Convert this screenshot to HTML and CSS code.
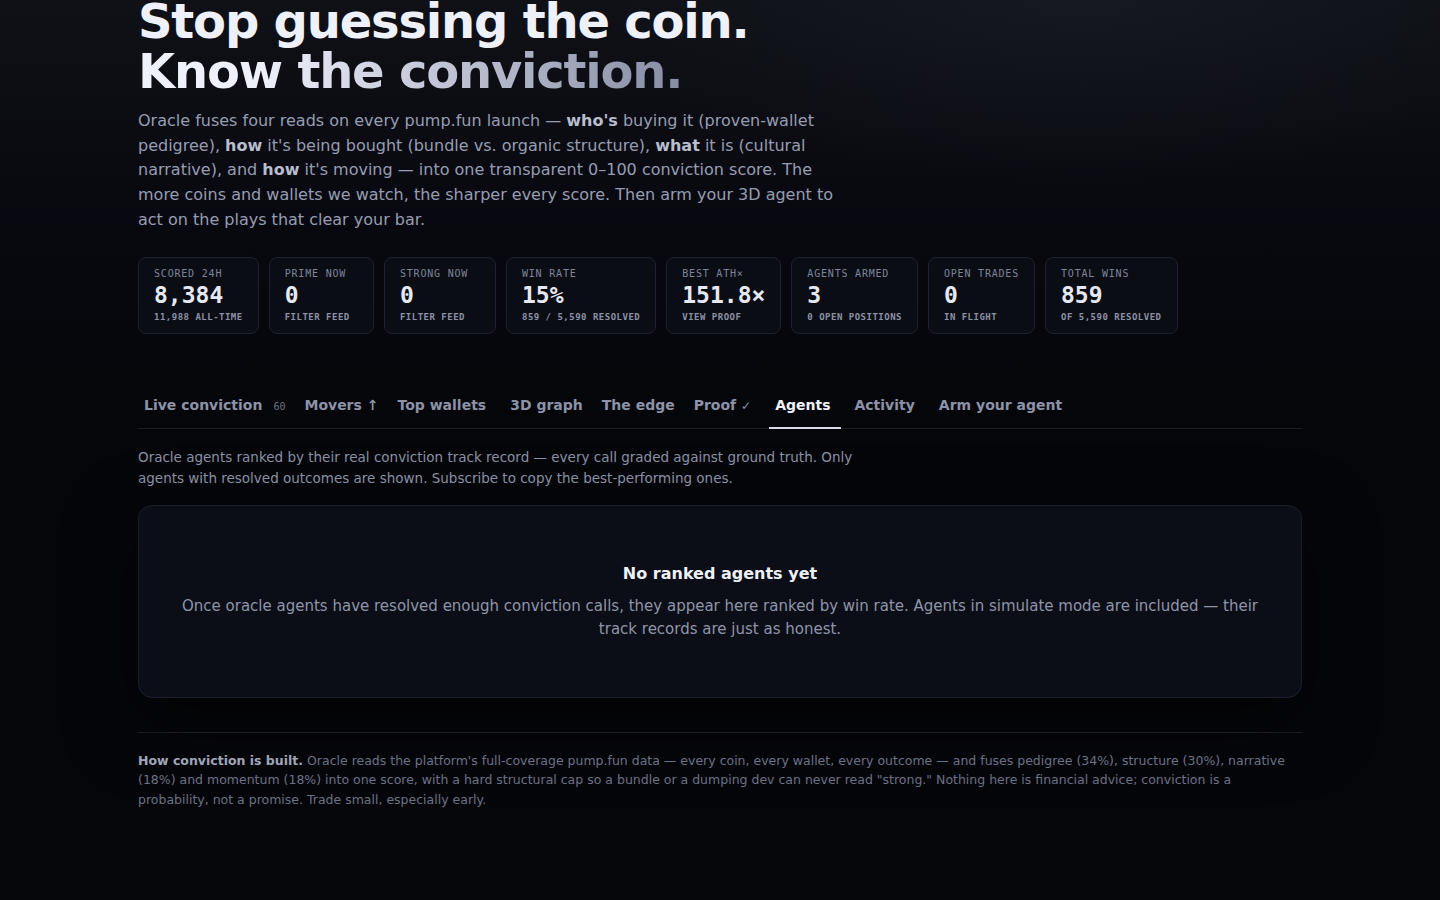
FILE: index.html
```html
<!DOCTYPE html>
<html lang="en">
  <head>
    <meta charset="UTF-8" />
    <title>Oracle — Conviction</title>
    <link rel="stylesheet" href="styles.css">
  </head>
  <body>
    <main class="page">
      <!-- Hero -->
      <section class="hero">
        <h1>Stop guessing the coin.<br /><span class="grad">Know the conviction.</span></h1>
        <p class="lede">
          Oracle fuses four reads on every pump.fun launch — <b>who's</b> buying it
          (proven-wallet pedigree), <b>how</b> it's being bought (bundle vs. organic
          structure), <b>what</b> it is (cultural narrative), and <b>how</b> it's moving —
          into one transparent 0–100 conviction score. The more coins and wallets we
          watch, the sharper every score. Then arm your 3D agent to act on the plays
          that clear your bar.
        </p>
      </section>

      <!-- Stat strip -->
      <div class="stats">
        <div class="stat">
          <div class="stat-label">Scored 24h</div>
          <div class="stat-value">8,384</div>
          <div class="stat-sub">11,988 all-time</div>
        </div>
        <a class="stat" href="#">
          <div class="stat-label">Prime now<span class="go">→</span></div>
          <div class="stat-value">0</div>
          <div class="stat-sub">Filter feed</div>
        </a>
        <a class="stat" href="#">
          <div class="stat-label">Strong now<span class="go">→</span></div>
          <div class="stat-value">0</div>
          <div class="stat-sub">Filter feed</div>
        </a>
        <div class="stat">
          <div class="stat-label">Win rate</div>
          <div class="stat-value">15%</div>
          <div class="stat-sub">859 / 5,590 resolved</div>
        </div>
        <a class="stat" href="#">
          <div class="stat-label">Best ATH×<span class="go">→</span></div>
          <div class="stat-value">151.8×</div>
          <div class="stat-sub">View proof</div>
        </a>
        <div class="stat">
          <div class="stat-label">Agents armed</div>
          <div class="stat-value">3</div>
          <div class="stat-sub">0 open positions</div>
        </div>
        <div class="stat">
          <div class="stat-label">Open trades</div>
          <div class="stat-value">0</div>
          <div class="stat-sub">in flight</div>
        </div>
        <div class="stat">
          <div class="stat-label">Total wins</div>
          <div class="stat-value">859</div>
          <div class="stat-sub">of 5,590 resolved</div>
        </div>
      </div>

      <!-- Tabs -->
      <nav class="tabs">
        <button class="tab">Live conviction<span class="count">60</span></button>
        <button class="tab">Movers ↑</button>
        <button class="tab">Top wallets<span class="count"></span></button>
        <button class="tab">3D graph</button>
        <button class="tab">The edge</button>
        <button class="tab">Proof <span class="tick">✓</span><span class="count"></span></button>
        <button class="tab active">Agents<span class="count"></span></button>
        <button class="tab">Activity<span class="count"></span></button>
        <button class="tab">Arm your agent</button>
      </nav>

      <!-- Agents panel -->
      <section class="panel">
        <p class="panel-desc">
          Oracle agents ranked by their real conviction track record — every call graded
          against ground truth. Only agents with resolved outcomes are shown. Subscribe to
          copy the best-performing ones.
        </p>
        <div class="empty">
          <h3>No ranked agents yet</h3>
          <p>
            Once oracle agents have resolved enough conviction calls, they appear here ranked
            by win rate. Agents in simulate mode are included — their track records are just
            as honest.
          </p>
        </div>
      </section>

      <footer class="method">
        <p>
          <b>How conviction is built.</b> Oracle reads the platform's full-coverage pump.fun
          data — every coin, every wallet, every outcome — and fuses pedigree (34%), structure
          (30%), narrative (18%) and momentum (18%) into one score, with a hard structural cap
          so a bundle or a dumping dev can never read "strong." Nothing here is financial
          advice; conviction is a probability, not a promise. Trade small, especially early.
        </p>
      </footer>
    </main>
  </body>
</html>
```

FILE: styles.css
```css
html {
  background: #05060a;
}

body {
  margin: 0;
  min-height: 100vh;
  font-family: "DejaVu Sans", "Liberation Sans", sans-serif;
  color: #e8ebf4;
  background:
    radial-gradient(ellipse 700px 260px at 75% 0%, rgba(40, 44, 58, 0.28), transparent 70%),
    linear-gradient(180deg, #0f1117 0, #080910 220px, #05060a 420px);
}

.page {
  max-width: 1164px;
  margin: 0 auto;
  padding-bottom: 60px;
}

/* hero */

h1 {
  margin: -4px 0 0;
  font-size: 48px;
  line-height: 1.05;
  letter-spacing: -0.025em;
  font-weight: 700;
  color: #eef0fa;
}

h1 .grad {
  background: linear-gradient(90deg, #eef0fa 22%, #868ca3 100%);
  -webkit-background-clip: text;
  background-clip: text;
  color: transparent;
}

.lede {
  max-width: 700px;
  margin: 12px 0 0;
  font-size: 16px;
  line-height: 24.8px;
  color: #979db1;
}

.lede b {
  color: #b9bece;
}

/* stats */

.stats {
  display: flex;
  flex-wrap: wrap;
  gap: 10px;
  margin-top: 24px;
}

.stat {
  display: block;
  padding: 9px 15px 10px;
  background: #0b0d15;
  border: 1px solid #1d2130;
  border-radius: 8px;
  font-family: "DejaVu Sans Mono", "Liberation Mono", monospace;
  text-decoration: none;
}

.stat-label {
  font-size: 10px;
  line-height: 14px;
  letter-spacing: 0.08em;
  text-transform: uppercase;
  color: #7f8599;
}

/* arrow only shows on hover */
.stat-label .go {
  margin-left: 5px;
  visibility: hidden;
}

a.stat:hover .go {
  visibility: visible;
}

.stat-value {
  margin-top: 1px;
  font-size: 23px;
  line-height: 26px;
  font-weight: 700;
  color: #e6e9f3;
}

.stat-sub {
  margin-top: 3px;
  font-size: 9px;
  line-height: 12px;
  font-weight: 700;
  letter-spacing: 0.055em;
  text-transform: uppercase;
  color: #8c92a5;
}

/* tabs */

.tabs {
  display: flex;
  gap: 7px;
  margin-top: 52px;
  border-bottom: 1px solid #1a1d28;
}

.tab {
  padding: 9px 6px 12px;
  margin-bottom: -1px;
  background: none;
  border: 0;
  border-bottom: 2px solid transparent;
  font-family: inherit;
  font-size: 14px;
  line-height: 20px;
  font-weight: 700;
  color: #8c92a7;
  cursor: pointer;
}

.tab.active {
  color: #f0f2f8;
  border-bottom-color: #d9dce8;
}

.tab .count {
  margin-left: 5px;
  font-family: "DejaVu Sans Mono", monospace;
  font-size: 10px;
  line-height: 1;
  font-weight: 400;
  color: #6b7185;
}

.tab .count:not(:empty) {
  margin-left: 11px;
}

.tab .tick {
  font-size: 12px;
  line-height: 1;
  font-weight: 400;
}

/* agents panel */

.panel-desc {
  max-width: 740px;
  margin: 18px 0 0;
  font-size: 13.5px;
  line-height: 21px;
  color: #8a90a4;
}

.empty {
  margin-top: 16px;
  padding: 58px 40px 56px;
  text-align: center;
  background: #0b0e16;
  border: 1px solid #1b1f2b;
  border-radius: 14px;
  box-shadow: 0 24px 70px rgba(0, 0, 0, 0.55);
}

.empty h3 {
  margin: 0 0 11px;
  font-size: 16px;
  line-height: 20px;
  color: #eef0f7;
}

.empty p {
  margin: 0;
  font-size: 15px;
  line-height: 23px;
  color: #8f95a9;
}

/* footer note */

.method {
  margin-top: 34px;
  padding-top: 18px;
  border-top: 1px solid #181b26;
}

.method p {
  margin: 0;
  font-size: 12.5px;
  line-height: 19.5px;
  color: #6c7286;
}

.method b {
  color: #a0a6b8;
}
```
